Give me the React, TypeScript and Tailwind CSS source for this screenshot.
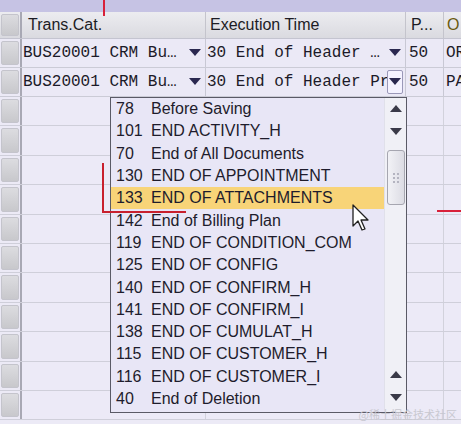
import React from "react";

const rows = [
  { cat: "BUS20001 CRM Bu…", time: "30 End of Header …", p: "50", o: "OR", focus: false },
  { cat: "BUS20001 CRM Bu…", time: "30 End of Header Pr", p: "50", o: "PA", focus: true },
];

const items = [
  ["78", "Before Saving"],
  ["101", "END ACTIVITY_H"],
  ["70", "End of All Documents"],
  ["130", "END OF APPOINTMENT"],
  ["133", "END OF ATTACHMENTS"],
  ["142", "End of Billing Plan"],
  ["119", "END OF CONDITION_COM"],
  ["125", "END OF CONFIG"],
  ["140", "END OF CONFIRM_H"],
  ["141", "END OF CONFIRM_I"],
  ["138", "END OF CUMULAT_H"],
  ["115", "END OF CUSTOMER_H"],
  ["116", "END OF CUSTOMER_I"],
  ["40", "End of Deletion"],
];

const Down = () => (
  <svg width="12" height="8" viewBox="0 0 12 8">
    <path d="M0 0 H12 L6 7 Z" fill="#2a2850" />
  </svg>
);

const Up = () => (
  <svg width="12" height="8" viewBox="0 0 12 8">
    <path d="M0 7 H12 L6 0 Z" fill="#3a3a48" />
  </svg>
);

const DownGray = () => (
  <svg width="12" height="8" viewBox="0 0 12 8">
    <path d="M0 0 H12 L6 7 Z" fill="#3a3a48" />
  </svg>
);

const RowHead = () => (
  <div className="h-full px-[1px] py-[2px]">
    <div className="h-full rounded-[2px] bg-gradient-to-b from-[#dcdce0] to-[#c8c8cc] border border-[#c4c4cc]" />
  </div>
);

const App = () => {
  const empty = Array.from({ length: 11 });
  return (
    <div className="relative w-[461px] h-[424px] overflow-hidden bg-[#eceaf6]" style={{ fontFamily: "'Liberation Sans', Arial, sans-serif" }}>
      {/* top strip */}
      <div className="h-[12px] bg-[#c6c3e4]" />

      {/* header */}
      <div className="grid grid-cols-[20px_2px_184px_200px_38px_1fr] h-[27px] bg-gradient-to-b from-[#ececf0] to-[#dadae0] border-b border-[#c4c4d0] text-[16px] text-[#1c1c24]">
        <RowHead />
        <div className="bg-[#a8a8b4]" />
        <div className="pl-[6px] flex items-center border-r border-[#c4c4cc]">Trans.Cat.</div>
        <div className="pl-[4px] flex items-center border-r border-[#c4c4cc]">Execution Time</div>
        <div className="pl-[5px] flex items-center border-r border-[#c4c4cc]">P...</div>
        <div className="pl-[3px] flex items-center text-[#6a5a10]">O</div>
      </div>

      {/* data rows */}
      {rows.map((r, i) => (
        <div key={i} className="grid grid-cols-[20px_2px_184px_200px_38px_1fr] h-[29px] border-b border-[#cbcbd6] text-[16px] text-[#1c1a28]" style={{ fontFamily: "'Liberation Mono', 'Courier New', monospace" }}>
          <RowHead />
          <div className="bg-[#a8a8b4]" />
          <div className="flex items-center justify-between pl-[1px] pr-[4px] border-r border-[#c8c8d4] bg-[#ebe9f6]">
            <span className="whitespace-nowrap">{r.cat}</span>
            <Down />
          </div>
          <div className="flex items-center justify-between pl-[1px] pr-[2px] border-r border-[#c8c8d4] bg-[#ebe9f6] overflow-hidden">
            <span className="whitespace-nowrap overflow-hidden">{r.time}</span>
            {r.focus ? (
              <div className="h-[24px] w-[16px] shrink-0 flex items-center justify-center border border-[#9a98b8] bg-[#f4f2ff] rounded-[2px]">
                <Down />
              </div>
            ) : (
              <span className="pr-[2px]"><Down /></span>
            )}
          </div>
          <div className="flex items-center pl-[3px] border-r border-[#c8c8d4] bg-[#ebe9f6]">{r.p}</div>
          <div className="flex items-center pl-[2px] bg-[#ebe9f6] whitespace-nowrap overflow-hidden">{r.o}</div>
        </div>
      ))}

      {/* empty rows */}
      {empty.map((_, i) => (
        <div key={i} className="grid grid-cols-[20px_2px_184px_200px_38px_1fr] h-[29.4px] border-b border-[#cfcfda]">
          <RowHead />
          <div className="bg-[#a8a8b4]" />
          <div className="border-r border-[#d2d2dc] bg-[#eceaf7]" />
          <div className="border-r border-[#d2d2dc] bg-[#eceaf7]" />
          <div className="border-r border-[#d2d2dc] bg-[#eceaf7]" />
          <div className="bg-[#eceaf7]" />
        </div>
      ))}

      {/* dropdown list */}
      <div className="absolute left-[110px] top-[97px] w-[297px] h-[316px] border border-[#5a5a66] bg-[#e8e6f6] flex">
        <div className="flex-1 text-[16px] text-[#1e1c2c]">
          {items.map(([n, t], i) => (
            <div key={i} className={`flex h-[22.3px] items-center pl-[5px] ${i === 4 ? "bg-[#f8d478]" : ""}`}>
              <span className="w-[35px] shrink-0">{n}</span>
              <span className="whitespace-nowrap">{t}</span>
            </div>
          ))}
        </div>
        <div className="w-[22px] bg-[#f0f0f6] border-l border-[#e0e0ea] flex flex-col items-center">
          <div className="h-[22px] flex items-center justify-center"><Up /></div>
          <div className="h-[24px] flex items-center justify-center"><DownGray /></div>
          <div className="mt-[6px] w-[18px] h-[55px] rounded-[3px] border border-[#a6a6b0] bg-gradient-to-r from-[#f2f2f6] to-[#dcdce4] flex items-center justify-center">
            <div className="grid grid-cols-2 gap-[2px]">
              {Array.from({ length: 6 }).map((_, k) => (
                <div key={k} className="w-[2px] h-[2px] bg-[#b4b4c0]" />
              ))}
            </div>
          </div>
          <div className="flex-1" />
          <div className="h-[22px] flex items-center justify-center"><Up /></div>
          <div className="h-[24px] flex items-center justify-center mb-[2px]"><DownGray /></div>
        </div>
      </div>

      {/* red annotation lines */}
      <div className="absolute left-[103px] top-0 w-[2px] h-[16px] bg-[#d8203a]" />
      <div className="absolute left-[102px] top-[163px] w-[2px] h-[50px] bg-[#c8202e]" />
      <div className="absolute left-[102px] top-[211px] w-[84px] h-[2px] bg-[#c8202e]" />
      <div className="absolute left-[437px] top-[210px] w-[24px] h-[2px] bg-[#d8203a]" />

      {/* mouse cursor */}
      <svg className="absolute left-[352px] top-[204px]" width="20" height="30" viewBox="0 0 20 30">
        <path d="M1 1 L1 22 L6 17 L10 26 L13 25 L9 16 L16 16 Z" fill="#ffffff" stroke="#202020" strokeWidth="1.3" strokeLinejoin="round" />
      </svg>

      {/* watermark */}
      <div className="absolute right-[4px] bottom-[2px] text-[11px] text-[#c8c8d0]" style={{ fontFamily: "'Noto Sans CJK SC', sans-serif" }}>
        @稀土掘金技术社区
      </div>
    </div>
  );
};

export default App;
